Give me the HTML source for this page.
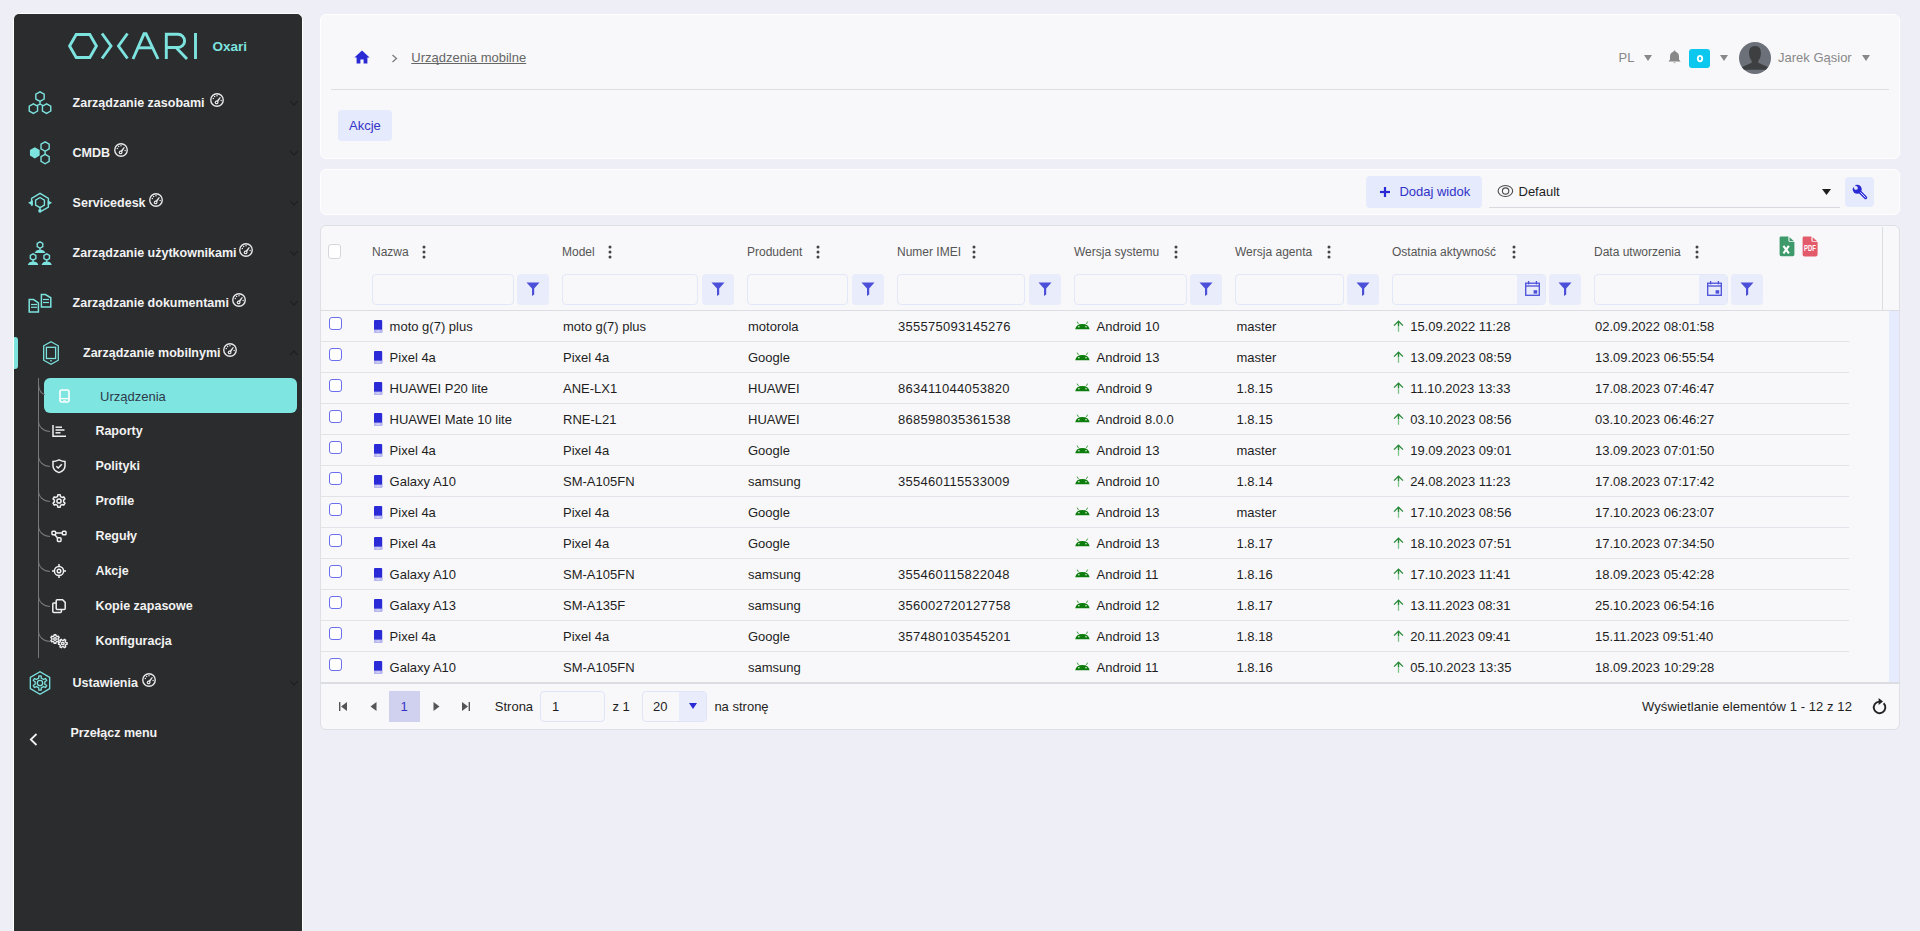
<!DOCTYPE html>
<html lang="pl">
<head>
<meta charset="utf-8">
<title>Urządzenia mobilne</title>
<style>
*{box-sizing:border-box;margin:0;padding:0}
html,body{width:1920px;height:931px;overflow:hidden}
body{background:#eeeef6;font-family:"Liberation Sans",sans-serif;position:relative;color:#1e1e1e}
.abs{position:absolute}
svg{display:block;overflow:visible}
#sb{position:absolute;left:13px;top:13px;width:290px;height:930px;background:#2b2c2e;border:1px solid #fff;border-bottom:none;border-radius:6px 6px 0 0}
.card{position:absolute;background:#f8f8fa;border:1px solid #fff;border-radius:6px}
.t{position:absolute;white-space:nowrap;line-height:1}
</style>
</head>
<body>
<div id="sb"></div>
<svg class="abs" style="left:68px;top:33px;" width="131" height="26" viewBox="0 0 131 26"><g fill="none" stroke="#7de3df" stroke-width="2.9" stroke-linejoin="miter">
<polygon points="1.6,13 8.2,1.5 21.8,1.5 28.4,13 21.8,24.5 8.2,24.5"/>
<polyline points="34,0.5 43,13 34,25.5"/>
<polyline points="59.5,0.5 50.5,13 59.5,25.5"/>
<polyline points="65,26 76,0.8 78,0.8 90,26"/>
<line x1="70.4" y1="14.8" x2="84.1" y2="14.8"/>
<path d="M98.3,26 V1.3 H110 A6.5,6.5 0 0 1 110,14.5 H98.3 M108,14.5 L119,26"/>
<line x1="127.5" y1="0" x2="127.5" y2="26"/>
</g></svg>
<div class="t" style="left:212.5px;top:39.97px;font-size:13.5px;color:#7de3df;font-weight:bold;">Oxari</div>
<svg class="abs" style="left:28px;top:91px;" width="24" height="24" viewBox="0 0 24 24"><g fill="none" stroke="#7de3df" stroke-width="1.4">
<polygon points="16.16,8.00 12.00,10.40 7.84,8.00 7.84,3.20 12.00,0.80 16.16,3.20"/><polygon points="9.56,20.00 5.40,22.40 1.24,20.00 1.24,15.20 5.40,12.80 9.56,15.20"/><polygon points="22.76,20.00 18.60,22.40 14.44,20.00 14.44,15.20 18.60,12.80 22.76,15.20"/>
<polyline points="12,10.4 12,13 9,14.6"/><line x1="12" y1="13" x2="15" y2="14.6"/></g></svg>
<div class="t" style="left:72.6px;top:97.42px;font-size:12.5px;color:#f2f2f2;font-weight:bold;">Zarządzanie zasobami</div>
<svg class="abs" style="left:209.5px;top:93px;" width="14" height="14" viewBox="0 0 14 14"><circle cx="7" cy="7" r="6.25" fill="none" stroke="#e8e8e8" stroke-width="1.4"/>
<g fill="#e8e8e8"><circle cx="6.6" cy="9.4" r="1.9"/><path d="M5.9,8.8 L9.9,3.9 L10.9,4.6 L7.4,9.9 Z"/>
<circle cx="3.3" cy="5.6" r="0.75"/><circle cx="4.6" cy="3.5" r="0.75"/><circle cx="7" cy="2.7" r="0.75"/><circle cx="11.1" cy="7.6" r="0.75"/></g>
<circle cx="6.6" cy="9.4" r="0.7" fill="#2b2c2e"/></svg>
<svg class="abs" style="left:289px;top:100px;" width="10" height="6" viewBox="0 0 10 6"><polyline points="1,1 5,5 9,1" fill="none" stroke="#1f2023" stroke-width="1.3"/></svg>
<svg class="abs" style="left:29px;top:141px;" width="24" height="24" viewBox="0 0 24 24"><polygon points="10.65,14.60 5.80,17.40 0.95,14.60 0.95,9.00 5.80,6.20 10.65,9.00" fill="#7de3df"/>
<g fill="none" stroke="#7de3df" stroke-width="1.4"><polygon points="20.17,7.95 16.10,10.30 12.03,7.95 12.03,3.25 16.10,0.90 20.17,3.25"/><polygon points="20.17,20.45 16.10,22.80 12.03,20.45 12.03,15.75 16.10,13.40 20.17,15.75"/>
<line x1="16.1" y1="10.3" x2="16.1" y2="13.4"/></g></svg>
<div class="t" style="left:72.6px;top:147.42px;font-size:12.5px;color:#f2f2f2;font-weight:bold;">CMDB</div>
<svg class="abs" style="left:113.5px;top:143px;" width="14" height="14" viewBox="0 0 14 14"><circle cx="7" cy="7" r="6.25" fill="none" stroke="#e8e8e8" stroke-width="1.4"/>
<g fill="#e8e8e8"><circle cx="6.6" cy="9.4" r="1.9"/><path d="M5.9,8.8 L9.9,3.9 L10.9,4.6 L7.4,9.9 Z"/>
<circle cx="3.3" cy="5.6" r="0.75"/><circle cx="4.6" cy="3.5" r="0.75"/><circle cx="7" cy="2.7" r="0.75"/><circle cx="11.1" cy="7.6" r="0.75"/></g>
<circle cx="6.6" cy="9.4" r="0.7" fill="#2b2c2e"/></svg>
<svg class="abs" style="left:289px;top:150px;" width="10" height="6" viewBox="0 0 10 6"><polyline points="1,1 5,5 9,1" fill="none" stroke="#1f2023" stroke-width="1.3"/></svg>
<svg class="abs" style="left:28px;top:191px;" width="24" height="24" viewBox="0 0 24 24"><g fill="none" stroke="#7de3df" stroke-width="1.4">
<polygon points="16.42,14.15 12.00,16.70 7.58,14.15 7.58,9.05 12.00,6.50 16.42,9.05"/>
<path d="M3.6,14.7 V7.3 L12,2.4 L20.4,7.3 V16.2 L13.4,20.2"/><line x1="12" y1="16.6" x2="12" y2="19"/></g>
<g fill="#7de3df"><polygon points="0,11.8 4.9,9.2 4.9,14.8"/><polygon points="24,11.8 19.7,9.2 19.7,14.6"/><circle cx="12" cy="19.9" r="1.8"/></g></svg>
<div class="t" style="left:72.6px;top:197.42px;font-size:12.5px;color:#f2f2f2;font-weight:bold;">Servicedesk</div>
<svg class="abs" style="left:148.5px;top:193px;" width="14" height="14" viewBox="0 0 14 14"><circle cx="7" cy="7" r="6.25" fill="none" stroke="#e8e8e8" stroke-width="1.4"/>
<g fill="#e8e8e8"><circle cx="6.6" cy="9.4" r="1.9"/><path d="M5.9,8.8 L9.9,3.9 L10.9,4.6 L7.4,9.9 Z"/>
<circle cx="3.3" cy="5.6" r="0.75"/><circle cx="4.6" cy="3.5" r="0.75"/><circle cx="7" cy="2.7" r="0.75"/><circle cx="11.1" cy="7.6" r="0.75"/></g>
<circle cx="6.6" cy="9.4" r="0.7" fill="#2b2c2e"/></svg>
<svg class="abs" style="left:289px;top:200px;" width="10" height="6" viewBox="0 0 10 6"><polyline points="1,1 5,5 9,1" fill="none" stroke="#1f2023" stroke-width="1.3"/></svg>
<svg class="abs" style="left:28px;top:241px;" width="24" height="24" viewBox="0 0 24 24"><g fill="none" stroke="#7de3df" stroke-width="1.4"><polygon points="14.77,5.70 12.00,7.30 9.23,5.70 9.23,2.50 12.00,0.90 14.77,2.50"/><polygon points="7.87,17.60 5.10,19.20 2.33,17.60 2.33,14.40 5.10,12.80 7.87,14.40"/><polygon points="21.47,17.60 18.70,19.20 15.93,17.60 15.93,14.40 18.70,12.80 21.47,14.40"/></g>
<g fill="#7de3df"><path d="M6.6,12.1 Q7.6,8.7 12,8.7 Q16.4,8.7 17.4,12.1 Z"/><path d="M-0.2,24 Q0.8,20.6 5.1,20.6 Q9.4,20.6 10.4,24 Z"/><path d="M13.6,24 Q14.6,20.6 18.7,20.6 Q22.8,20.6 23.8,24 Z"/></g>
<g stroke="#7de3df" stroke-width="1.3"><line x1="12" y1="7.3" x2="12" y2="9"/><line x1="5.1" y1="19.2" x2="5.1" y2="21"/><line x1="18.7" y1="19.2" x2="18.7" y2="21"/></g></svg>
<div class="t" style="left:72.6px;top:247.42px;font-size:12.5px;color:#f2f2f2;font-weight:bold;">Zarządzanie użytkownikami</div>
<svg class="abs" style="left:239px;top:243px;" width="14" height="14" viewBox="0 0 14 14"><circle cx="7" cy="7" r="6.25" fill="none" stroke="#e8e8e8" stroke-width="1.4"/>
<g fill="#e8e8e8"><circle cx="6.6" cy="9.4" r="1.9"/><path d="M5.9,8.8 L9.9,3.9 L10.9,4.6 L7.4,9.9 Z"/>
<circle cx="3.3" cy="5.6" r="0.75"/><circle cx="4.6" cy="3.5" r="0.75"/><circle cx="7" cy="2.7" r="0.75"/><circle cx="11.1" cy="7.6" r="0.75"/></g>
<circle cx="6.6" cy="9.4" r="0.7" fill="#2b2c2e"/></svg>
<svg class="abs" style="left:289px;top:250px;" width="10" height="6" viewBox="0 0 10 6"><polyline points="1,1 5,5 9,1" fill="none" stroke="#1f2023" stroke-width="1.3"/></svg>
<svg class="abs" style="left:28px;top:293px;" width="24" height="20" viewBox="0 0 24 20"><g fill="none" stroke="#7de3df" stroke-width="1.5">
<path d="M1.2,6.6 H5.6 L10.4,9.8 V19 H1.2 Z"/><path d="M13.4,1.6 H17.4 L22.8,4.8 V14 H13.4 Z"/></g>
<g fill="none" stroke="#7de3df" stroke-width="1.2">
<line x1="3" y1="11.5" x2="9" y2="11.5"/><line x1="3" y1="14.3" x2="9" y2="14.3"/>
<line x1="15" y1="6.5" x2="21" y2="6.5"/><line x1="15" y1="9.5" x2="21" y2="9.5"/></g></svg>
<div class="t" style="left:72.6px;top:297.42px;font-size:12.5px;color:#f2f2f2;font-weight:bold;">Zarządzanie dokumentami</div>
<svg class="abs" style="left:232px;top:293px;" width="14" height="14" viewBox="0 0 14 14"><circle cx="7" cy="7" r="6.25" fill="none" stroke="#e8e8e8" stroke-width="1.4"/>
<g fill="#e8e8e8"><circle cx="6.6" cy="9.4" r="1.9"/><path d="M5.9,8.8 L9.9,3.9 L10.9,4.6 L7.4,9.9 Z"/>
<circle cx="3.3" cy="5.6" r="0.75"/><circle cx="4.6" cy="3.5" r="0.75"/><circle cx="7" cy="2.7" r="0.75"/><circle cx="11.1" cy="7.6" r="0.75"/></g>
<circle cx="6.6" cy="9.4" r="0.7" fill="#2b2c2e"/></svg>
<svg class="abs" style="left:289px;top:300px;" width="10" height="6" viewBox="0 0 10 6"><polyline points="1,1 5,5 9,1" fill="none" stroke="#1f2023" stroke-width="1.3"/></svg>
<svg class="abs" style="left:43px;top:341px;" width="16" height="24" viewBox="0 0 16 24"><g fill="none" stroke="#7de3df" stroke-width="1.3">
<polygon points="8,0.8 15.3,4.8 15.3,19.2 8,23.2 0.7,19.2 0.7,4.8"/>
<rect x="3.4" y="6.3" width="9.2" height="11.2"/></g><rect x="7" y="19.3" width="2" height="1.1" fill="#7de3df"/></svg>
<div class="t" style="left:83px;top:347.42px;font-size:12.5px;color:#f2f2f2;font-weight:bold;">Zarządzanie mobilnymi</div>
<svg class="abs" style="left:222.5px;top:343px;" width="14" height="14" viewBox="0 0 14 14"><circle cx="7" cy="7" r="6.25" fill="none" stroke="#e8e8e8" stroke-width="1.4"/>
<g fill="#e8e8e8"><circle cx="6.6" cy="9.4" r="1.9"/><path d="M5.9,8.8 L9.9,3.9 L10.9,4.6 L7.4,9.9 Z"/>
<circle cx="3.3" cy="5.6" r="0.75"/><circle cx="4.6" cy="3.5" r="0.75"/><circle cx="7" cy="2.7" r="0.75"/><circle cx="11.1" cy="7.6" r="0.75"/></g>
<circle cx="6.6" cy="9.4" r="0.7" fill="#2b2c2e"/></svg>
<svg class="abs" style="left:289px;top:350px;" width="10" height="6" viewBox="0 0 10 6"><polyline points="1,5 5,1 9,5" fill="none" stroke="#1f2023" stroke-width="1.3"/></svg>
<svg class="abs" style="left:29px;top:671px;" width="22" height="24" viewBox="0 0 22 24"><g fill="none" stroke="#7de3df" stroke-width="1.3">
<polygon points="20.70,17.60 11.00,23.20 1.30,17.60 1.30,6.40 11.00,0.80 20.70,6.40"/>
<circle cx="11" cy="12" r="2.7"/>
<path d="M9.71,7.17 L9.87,4.89 L12.13,4.89 L12.29,7.17 L14.54,8.46 L16.60,7.47 L17.72,9.42 L15.83,10.71 L15.83,13.29 L17.72,14.58 L16.60,16.53 L14.54,15.54 L12.29,16.83 L12.13,19.11 L9.87,19.11 L9.71,16.83 L7.46,15.54 L5.40,16.53 L4.28,14.58 L6.17,13.29 L6.17,10.71 L4.28,9.42 L5.40,7.47 L7.46,8.46 Z" stroke-linejoin="round"/></g></svg>
<div class="t" style="left:72.6px;top:677.42px;font-size:12.5px;color:#f2f2f2;font-weight:bold;">Ustawienia</div>
<svg class="abs" style="left:142px;top:673px;" width="14" height="14" viewBox="0 0 14 14"><circle cx="7" cy="7" r="6.25" fill="none" stroke="#e8e8e8" stroke-width="1.4"/>
<g fill="#e8e8e8"><circle cx="6.6" cy="9.4" r="1.9"/><path d="M5.9,8.8 L9.9,3.9 L10.9,4.6 L7.4,9.9 Z"/>
<circle cx="3.3" cy="5.6" r="0.75"/><circle cx="4.6" cy="3.5" r="0.75"/><circle cx="7" cy="2.7" r="0.75"/><circle cx="11.1" cy="7.6" r="0.75"/></g>
<circle cx="6.6" cy="9.4" r="0.7" fill="#2b2c2e"/></svg>
<svg class="abs" style="left:289px;top:680px;" width="10" height="6" viewBox="0 0 10 6"><polyline points="1,1 5,5 9,1" fill="none" stroke="#1f2023" stroke-width="1.3"/></svg>
<div class="abs" style="left:14px;top:337px;width:4px;height:32px;background:#7de3df;border-radius:0 3px 3px 0"></div>
<div class="abs" style="left:38px;top:378px;width:1px;height:280px;background:#77787a"></div>
<div class="abs" style="left:44px;top:378px;width:253px;height:35px;background:#7ee5e1;border-radius:6px"></div>
<div class="abs" style="left:38px;top:380px;width:7px;height:15px;border-left:1px solid #77787a;border-bottom:1px solid #77787a;border-bottom-left-radius:8px 13px"></div>
<svg class="abs" style="left:59px;top:389px;" width="11" height="14" viewBox="0 0 11 14"><rect x="1" y="1" width="9" height="12" rx="1.6" fill="none" stroke="#fff" stroke-width="1.6"/><line x1="1" y1="9.6" x2="10" y2="9.6" stroke="#fff" stroke-width="1.3"/><line x1="4.3" y1="11.3" x2="6.7" y2="11.3" stroke="#fff" stroke-width="0.9"/></svg>
<div class="t" style="left:100px;top:389.99px;font-size:13px;color:#2e3a4a;">Urządzenia</div>
<div class="abs" style="left:38px;top:421px;width:12px;height:11px;border-left:1px solid #77787a;border-bottom:1px solid #77787a;border-bottom-left-radius:12px 11px"></div>
<svg class="abs" style="left:52px;top:425px;" width="15" height="13" viewBox="0 0 15 13"><g fill="none" stroke="#f0f0f0" stroke-width="1.5"><polyline points="1,0 1,11.2 14,11.2"/><line x1="3.5" y1="2.2" x2="10" y2="2.2"/><line x1="3.5" y1="5" x2="12.5" y2="5"/><line x1="3.5" y1="7.8" x2="8.5" y2="7.8"/></g></svg>
<div class="t" style="left:95.4px;top:425.42px;font-size:12.5px;color:#f2f2f2;font-weight:bold;">Raporty</div>
<div class="abs" style="left:38px;top:456px;width:12px;height:11px;border-left:1px solid #77787a;border-bottom:1px solid #77787a;border-bottom-left-radius:12px 11px"></div>
<svg class="abs" style="left:52px;top:459px;" width="14" height="15" viewBox="0 0 14 15"><g fill="none" stroke="#f0f0f0" stroke-width="1.5"><path d="M7,0.9 Q10.5,2.6 13,2.6 V7 Q13,11.5 7,13.6 Q1,11.5 1,7 V2.6 Q3.5,2.6 7,0.9 Z"/><polyline points="4.3,7.2 6.2,9 9.8,5.2"/></g></svg>
<div class="t" style="left:95.4px;top:460.42px;font-size:12.5px;color:#f2f2f2;font-weight:bold;">Polityki</div>
<div class="abs" style="left:38px;top:491px;width:12px;height:11px;border-left:1px solid #77787a;border-bottom:1px solid #77787a;border-bottom-left-radius:12px 11px"></div>
<svg class="abs" style="left:52px;top:494px;" width="14" height="14" viewBox="0 0 14 14"><g fill="none" stroke="#f0f0f0" stroke-width="1.5" stroke-linejoin="round"><circle cx="7" cy="7" r="2.1"/><path d="M5.50,2.55 L5.82,0.81 L8.18,0.81 L8.50,2.55 L10.11,3.47 L11.77,2.88 L12.95,4.93 L11.61,6.07 L11.61,7.93 L12.95,9.07 L11.77,11.12 L10.11,10.53 L8.50,11.45 L8.18,13.19 L5.82,13.19 L5.50,11.45 L3.89,10.53 L2.23,11.12 L1.05,9.07 L2.39,7.93 L2.39,6.07 L1.05,4.93 L2.23,2.88 L3.89,3.47 Z"/></g></svg>
<div class="t" style="left:95.4px;top:495.42px;font-size:12.5px;color:#f2f2f2;font-weight:bold;">Profile</div>
<div class="abs" style="left:38px;top:526px;width:12px;height:11px;border-left:1px solid #77787a;border-bottom:1px solid #77787a;border-bottom-left-radius:12px 11px"></div>
<svg class="abs" style="left:51px;top:530px;" width="16" height="13" viewBox="0 0 16 13"><g fill="none" stroke="#f0f0f0" stroke-width="1.5"><rect x="1" y="1.2" width="3.6" height="3.6" rx="0.8"/><rect x="11.4" y="1.2" width="3.6" height="3.6" rx="0.8"/><rect x="6.4" y="7.8" width="3.6" height="3.6" rx="0.8"/><line x1="4.6" y1="3" x2="11.4" y2="3"/><line x1="3.6" y1="4.6" x2="6.6" y2="8"/></g></svg>
<div class="t" style="left:95.4px;top:530.42px;font-size:12.5px;color:#f2f2f2;font-weight:bold;">Reguły</div>
<div class="abs" style="left:38px;top:561px;width:12px;height:11px;border-left:1px solid #77787a;border-bottom:1px solid #77787a;border-bottom-left-radius:12px 11px"></div>
<svg class="abs" style="left:52px;top:564px;" width="14" height="14" viewBox="0 0 14 14"><g fill="none" stroke="#f0f0f0" stroke-width="1.5"><circle cx="7" cy="7" r="4.6"/><circle cx="7" cy="7" r="1.8"/><line x1="7" y1="0" x2="7" y2="2.2"/><line x1="7" y1="11.8" x2="7" y2="14"/><line x1="0" y1="7" x2="2.2" y2="7"/><line x1="11.8" y1="7" x2="14" y2="7"/></g></svg>
<div class="t" style="left:95.4px;top:565.42px;font-size:12.5px;color:#f2f2f2;font-weight:bold;">Akcje</div>
<div class="abs" style="left:38px;top:596px;width:12px;height:11px;border-left:1px solid #77787a;border-bottom:1px solid #77787a;border-bottom-left-radius:12px 11px"></div>
<svg class="abs" style="left:52px;top:599px;" width="14" height="14" viewBox="0 0 14 14"><g fill="none" stroke="#f0f0f0" stroke-width="1.5"><path d="M5.2,0.8 H10.6 L13.2,3.4 V9.6 Q13.2,10.6 12.2,10.6 H5.2 Q4.2,10.6 4.2,9.6 V1.8 Q4.2,0.8 5.2,0.8 Z"/><path d="M4.2,4 H1.8 Q0.8,4 0.8,5 V12.6 Q0.8,13.6 1.8,13.6 H8.4 Q9.4,13.6 9.4,12.6 V10.6"/></g></svg>
<div class="t" style="left:95.4px;top:600.42px;font-size:12.5px;color:#f2f2f2;font-weight:bold;">Kopie zapasowe</div>
<div class="abs" style="left:38px;top:631px;width:12px;height:11px;border-left:1px solid #77787a;border-bottom:1px solid #77787a;border-bottom-left-radius:12px 11px"></div>
<svg class="abs" style="left:50px;top:634px;" width="18" height="14" viewBox="0 0 18 14"><g fill="none" stroke="#f0f0f0" stroke-width="1.4" stroke-linejoin="round"><circle cx="5" cy="5" r="1.3"/><path d="M3.98,1.97 L4.18,0.68 L5.82,0.68 L6.02,1.97 L7.12,2.60 L8.33,2.12 L9.16,3.55 L8.14,4.37 L8.14,5.63 L9.16,6.45 L8.33,7.88 L7.12,7.40 L6.02,8.03 L5.82,9.32 L4.18,9.32 L3.98,8.03 L2.88,7.40 L1.67,7.88 L0.84,6.45 L1.86,5.63 L1.86,4.37 L0.84,3.55 L1.67,2.12 L2.88,2.60 Z"/><circle cx="12.8" cy="9.5" r="1.3"/><path d="M15.83,8.48 L17.12,8.68 L17.12,10.32 L15.83,10.52 L15.20,11.62 L15.68,12.83 L14.25,13.66 L13.43,12.64 L12.17,12.64 L11.35,13.66 L9.92,12.83 L10.40,11.62 L9.77,10.52 L8.48,10.32 L8.48,8.68 L9.77,8.48 L10.40,7.38 L9.92,6.17 L11.35,5.34 L12.17,6.36 L13.43,6.36 L14.25,5.34 L15.68,6.17 L15.20,7.38 Z"/></g></svg>
<div class="t" style="left:95.4px;top:635.42px;font-size:12.5px;color:#f2f2f2;font-weight:bold;">Konfiguracja</div>
<svg class="abs" style="left:29px;top:733px;" width="9" height="13" viewBox="0 0 9 13"><polyline points="7.5,1 1.8,6.5 7.5,12" fill="none" stroke="#f2f2f2" stroke-width="1.8"/></svg>
<div class="t" style="left:70.4px;top:727.42px;font-size:12.5px;color:#f2f2f2;font-weight:bold;">Przełącz menu</div>

<div class="card" style="left:320px;top:14px;width:1580px;height:145px"></div>
<div class="card" style="left:320px;top:169px;width:1580px;height:46px"></div>
<div class="card" style="left:320px;top:225px;width:1580px;height:505px;border-color:#dfe0e6"></div>
<svg class="abs" style="left:354px;top:50px;" width="16" height="14" viewBox="0 0 16 14"><path d="M8,0.6 L15.6,7.4 H13.4 V13.6 H9.6 V9.6 H6.4 V13.6 H2.6 V7.4 H0.4 Z" fill="#2a2ad4"/></svg>
<svg class="abs" style="left:391px;top:54px;" width="7" height="9" viewBox="0 0 7 9"><polyline points="1.5,1 5.5,4.5 1.5,8" fill="none" stroke="#777" stroke-width="1.2"/></svg>
<div class="t" style="left:411.3px;top:50.99px;font-size:13px;color:#666;text-decoration:underline;text-underline-offset:0.6px;text-decoration-skip-ink:none">Urządzenia mobilne</div>
<div class="abs" style="left:331px;top:89px;width:1558px;height:1px;background:#dcdde3"></div>
<div class="abs" style="left:338px;top:110px;width:54px;height:31px;background:#e5eafc;border-radius:4px"></div>
<div class="t" style="left:349px;top:118.99px;font-size:13px;color:#3434c6;">Akcje</div>
<div class="t" style="left:1618.5px;top:51.29px;font-size:13px;color:#888;">PL</div>
<svg class="abs" style="left:1644px;top:55px;" width="8" height="6" viewBox="0 0 8 6"><polygon points="0,0 8,0 4,6" fill="#888"/></svg>
<svg class="abs" style="left:1668px;top:50px;" width="13" height="14" viewBox="0 0 13 14"><path d="M6.5,0.6 Q7.6,0.6 7.6,1.8 Q11,2.8 11,6.6 V9.6 L12.6,11.6 H0.4 L2,9.6 V6.6 Q2,2.8 5.4,1.8 Q5.4,0.6 6.5,0.6 Z" fill="#888"/><path d="M5,12.4 H8 Q6.5,14 5,12.4Z" fill="#888"/></svg>
<div class="abs" style="left:1689px;top:49px;width:21px;height:19px;background:#0cc8ee;border-radius:3px"></div>
<svg class="abs" style="left:1696px;top:54px;" width="8" height="9" viewBox="0 0 8 9"><ellipse cx="4" cy="4.6" rx="2.2" ry="2.75" fill="none" stroke="#fff" stroke-width="1.9"/></svg>
<svg class="abs" style="left:1720px;top:55px;" width="8" height="6" viewBox="0 0 8 6"><polygon points="0,0 8,0 4,6" fill="#888"/></svg>
<svg class="abs" style="left:1739px;top:42px;" width="32" height="32" viewBox="0 0 32 32"><defs><clipPath id="avc"><circle cx="16" cy="16" r="16"/></clipPath></defs><circle cx="16" cy="16" r="16" fill="#6b7079"/><path clip-path="url(#avc)" d="M16,3.9 C21.4,3.9 22,8 21.9,11.5 C21.8,15 20.6,17.4 19.3,18.8 L19.3,20.8 L28.8,25 V27.7 H3.2 V25 L12.7,20.8 L12.7,18.8 C11.4,17.4 10.2,15 10.1,11.5 C10,8 10.6,3.9 16,3.9 Z" fill="#3e3f41"/></svg>
<div class="t" style="left:1778px;top:51.29px;font-size:13px;color:#888;">Jarek Gąsior</div>
<svg class="abs" style="left:1862px;top:55px;" width="8" height="6" viewBox="0 0 8 6"><polygon points="0,0 8,0 4,6" fill="#888"/></svg>
<div class="abs" style="left:1366px;top:176px;width:116px;height:32px;background:#e5eafc;border-radius:4px"></div>
<svg class="abs" style="left:1380px;top:187px;" width="10" height="10" viewBox="0 0 10 10"><g stroke="#2a2ad4" stroke-width="2.2"><line x1="5" y1="0" x2="5" y2="10"/><line x1="0" y1="5" x2="10" y2="5"/></g></svg>
<div class="t" style="left:1399.4px;top:184.59px;font-size:13px;color:#3232c8;">Dodaj widok</div>
<svg class="abs" style="left:1497px;top:184px;" width="17" height="14" viewBox="0 0 17 14"><g fill="none" stroke="#4a4a4a" stroke-width="1.1"><ellipse cx="8.4" cy="7" rx="7.3" ry="5.5"/><ellipse cx="8.6" cy="7" rx="3.2" ry="3.1"/></g></svg>
<div class="t" style="left:1518.5px;top:184.59px;font-size:13px;color:#1e1e1e;">Default</div>
<svg class="abs" style="left:1822px;top:189px;" width="9" height="6" viewBox="0 0 9 6"><polygon points="0,0 9,0 4.5,6" fill="#1e1e1e"/></svg>
<div class="abs" style="left:1489px;top:207px;width:351px;height:1px;background:#d8d9de"></div>
<div class="abs" style="left:1845px;top:177px;width:29px;height:30px;background:#e5eafc;border-radius:4px"></div>
<svg class="abs" style="left:1852px;top:184px;" width="16" height="16" viewBox="0 0 16 16"><g stroke-linecap="round"><line x1="6.8" y1="6.8" x2="13.6" y2="13.6" stroke="#2a2ad4" stroke-width="3.2"/><line x1="7.4" y1="7.4" x2="13.4" y2="13.4" stroke="#e5eafc" stroke-width="1"/></g><circle cx="5.2" cy="5.2" r="4.5" fill="#2a2ad4"/><circle cx="3.9" cy="3.9" r="1.9" fill="#e5eafc"/><path d="M3.9,2 L1.2,-0.6 L-0.6,1.2 L2,3.9 Z" fill="#e5eafc"/></svg>

<div class="abs" style="left:328px;top:244px;width:13px;height:15px;border:1px solid #d6d7dc;border-radius:3px;background:#fff"></div>
<div class="t" style="left:372px;top:245.84px;font-size:12px;color:#555;">Nazwa</div>
<svg class="abs" style="left:421.5px;top:245px;" width="4" height="14" viewBox="0 0 4 14"><g fill="#444"><circle cx="2" cy="2" r="1.5"/><circle cx="2" cy="7" r="1.5"/><circle cx="2" cy="12" r="1.5"/></g></svg>
<div class="abs" style="left:372px;top:274px;width:142px;height:31px;border:1px solid #e3e8f8;border-radius:4px;overflow:hidden"></div>
<div class="abs" style="left:517px;top:274px;width:32px;height:31px;background:#e8ecfb;border-radius:4px"></div>
<svg class="abs" style="left:526px;top:282px;" width="14" height="14" viewBox="0 0 14 14"><path d="M0.5,0.5 H13.5 L8.2,6.4 V12.5 L6,14 V6.4 Z" fill="#4c50d9"/></svg>
<div class="t" style="left:562px;top:245.84px;font-size:12px;color:#555;">Model</div>
<svg class="abs" style="left:607.5px;top:245px;" width="4" height="14" viewBox="0 0 4 14"><g fill="#444"><circle cx="2" cy="2" r="1.5"/><circle cx="2" cy="7" r="1.5"/><circle cx="2" cy="12" r="1.5"/></g></svg>
<div class="abs" style="left:562px;top:274px;width:136px;height:31px;border:1px solid #e3e8f8;border-radius:4px;overflow:hidden"></div>
<div class="abs" style="left:702px;top:274px;width:32px;height:31px;background:#e8ecfb;border-radius:4px"></div>
<svg class="abs" style="left:711px;top:282px;" width="14" height="14" viewBox="0 0 14 14"><path d="M0.5,0.5 H13.5 L8.2,6.4 V12.5 L6,14 V6.4 Z" fill="#4c50d9"/></svg>
<div class="t" style="left:747px;top:245.84px;font-size:12px;color:#555;">Produdent</div>
<svg class="abs" style="left:815.5px;top:245px;" width="4" height="14" viewBox="0 0 4 14"><g fill="#444"><circle cx="2" cy="2" r="1.5"/><circle cx="2" cy="7" r="1.5"/><circle cx="2" cy="12" r="1.5"/></g></svg>
<div class="abs" style="left:747px;top:274px;width:101px;height:31px;border:1px solid #e3e8f8;border-radius:4px;overflow:hidden"></div>
<div class="abs" style="left:852px;top:274px;width:32px;height:31px;background:#e8ecfb;border-radius:4px"></div>
<svg class="abs" style="left:861px;top:282px;" width="14" height="14" viewBox="0 0 14 14"><path d="M0.5,0.5 H13.5 L8.2,6.4 V12.5 L6,14 V6.4 Z" fill="#4c50d9"/></svg>
<div class="t" style="left:897px;top:245.84px;font-size:12px;color:#555;">Numer IMEI</div>
<svg class="abs" style="left:971.5px;top:245px;" width="4" height="14" viewBox="0 0 4 14"><g fill="#444"><circle cx="2" cy="2" r="1.5"/><circle cx="2" cy="7" r="1.5"/><circle cx="2" cy="12" r="1.5"/></g></svg>
<div class="abs" style="left:897px;top:274px;width:128px;height:31px;border:1px solid #e3e8f8;border-radius:4px;overflow:hidden"></div>
<div class="abs" style="left:1029px;top:274px;width:32px;height:31px;background:#e8ecfb;border-radius:4px"></div>
<svg class="abs" style="left:1038px;top:282px;" width="14" height="14" viewBox="0 0 14 14"><path d="M0.5,0.5 H13.5 L8.2,6.4 V12.5 L6,14 V6.4 Z" fill="#4c50d9"/></svg>
<div class="t" style="left:1074px;top:245.84px;font-size:12px;color:#555;">Wersja systemu</div>
<svg class="abs" style="left:1173.5px;top:245px;" width="4" height="14" viewBox="0 0 4 14"><g fill="#444"><circle cx="2" cy="2" r="1.5"/><circle cx="2" cy="7" r="1.5"/><circle cx="2" cy="12" r="1.5"/></g></svg>
<div class="abs" style="left:1074px;top:274px;width:113px;height:31px;border:1px solid #e3e8f8;border-radius:4px;overflow:hidden"></div>
<div class="abs" style="left:1190px;top:274px;width:32px;height:31px;background:#e8ecfb;border-radius:4px"></div>
<svg class="abs" style="left:1199px;top:282px;" width="14" height="14" viewBox="0 0 14 14"><path d="M0.5,0.5 H13.5 L8.2,6.4 V12.5 L6,14 V6.4 Z" fill="#4c50d9"/></svg>
<div class="t" style="left:1235px;top:245.84px;font-size:12px;color:#555;">Wersja agenta</div>
<svg class="abs" style="left:1326.5px;top:245px;" width="4" height="14" viewBox="0 0 4 14"><g fill="#444"><circle cx="2" cy="2" r="1.5"/><circle cx="2" cy="7" r="1.5"/><circle cx="2" cy="12" r="1.5"/></g></svg>
<div class="abs" style="left:1235px;top:274px;width:109px;height:31px;border:1px solid #e3e8f8;border-radius:4px;overflow:hidden"></div>
<div class="abs" style="left:1347px;top:274px;width:32px;height:31px;background:#e8ecfb;border-radius:4px"></div>
<svg class="abs" style="left:1356px;top:282px;" width="14" height="14" viewBox="0 0 14 14"><path d="M0.5,0.5 H13.5 L8.2,6.4 V12.5 L6,14 V6.4 Z" fill="#4c50d9"/></svg>
<div class="t" style="left:1392px;top:245.84px;font-size:12px;color:#555;">Ostatnia aktywność</div>
<svg class="abs" style="left:1511.5px;top:245px;" width="4" height="14" viewBox="0 0 4 14"><g fill="#444"><circle cx="2" cy="2" r="1.5"/><circle cx="2" cy="7" r="1.5"/><circle cx="2" cy="12" r="1.5"/></g></svg>
<div class="abs" style="left:1392px;top:274px;width:154px;height:31px;border:1px solid #e3e8f8;border-radius:4px;overflow:hidden"><div class="abs" style="right:0;top:0;width:28px;height:29px;background:#e8ecfb"></div></div>
<svg class="abs" style="left:1525px;top:281px;" width="15" height="15" viewBox="0 0 15 15"><g fill="none" stroke="#4c50d9" stroke-width="1.3"><rect x="0.7" y="2.2" width="13.6" height="12.1"/><line x1="0.7" y1="5" x2="14.3" y2="5"/><line x1="3.6" y1="0" x2="3.6" y2="3.4"/><line x1="11.4" y1="0" x2="11.4" y2="3.4"/></g><rect x="8.6" y="9.2" width="3.6" height="3.4" fill="#4c50d9"/></svg>
<div class="abs" style="left:1549px;top:274px;width:32px;height:31px;background:#e8ecfb;border-radius:4px"></div>
<svg class="abs" style="left:1558px;top:282px;" width="14" height="14" viewBox="0 0 14 14"><path d="M0.5,0.5 H13.5 L8.2,6.4 V12.5 L6,14 V6.4 Z" fill="#4c50d9"/></svg>
<div class="t" style="left:1594px;top:245.84px;font-size:12px;color:#555;">Data utworzenia</div>
<svg class="abs" style="left:1694.5px;top:245px;" width="4" height="14" viewBox="0 0 4 14"><g fill="#444"><circle cx="2" cy="2" r="1.5"/><circle cx="2" cy="7" r="1.5"/><circle cx="2" cy="12" r="1.5"/></g></svg>
<div class="abs" style="left:1594px;top:274px;width:134px;height:31px;border:1px solid #e3e8f8;border-radius:4px;overflow:hidden"><div class="abs" style="right:0;top:0;width:28px;height:29px;background:#e8ecfb"></div></div>
<svg class="abs" style="left:1707px;top:281px;" width="15" height="15" viewBox="0 0 15 15"><g fill="none" stroke="#4c50d9" stroke-width="1.3"><rect x="0.7" y="2.2" width="13.6" height="12.1"/><line x1="0.7" y1="5" x2="14.3" y2="5"/><line x1="3.6" y1="0" x2="3.6" y2="3.4"/><line x1="11.4" y1="0" x2="11.4" y2="3.4"/></g><rect x="8.6" y="9.2" width="3.6" height="3.4" fill="#4c50d9"/></svg>
<div class="abs" style="left:1731px;top:274px;width:32px;height:31px;background:#e8ecfb;border-radius:4px"></div>
<svg class="abs" style="left:1740px;top:282px;" width="14" height="14" viewBox="0 0 14 14"><path d="M0.5,0.5 H13.5 L8.2,6.4 V12.5 L6,14 V6.4 Z" fill="#4c50d9"/></svg>
<div class="abs" style="left:1882px;top:227px;width:1px;height:84px;background:#dcdde2"></div>
<div class="abs" style="left:321px;top:310px;width:1578px;height:1px;background:#dcdde2"></div>
<svg class="abs" style="left:1779px;top:236px;" width="16" height="21" viewBox="0 0 16 21"><path d="M1.8,0.6 H9.4 V4.6 Q9.4,6 10.8,6 H15.4 V18.6 Q15.4,20.2 13.8,20.2 H2.2 Q0.6,20.2 0.6,18.6 V1.8 Q0.6,0.6 1.8,0.6 Z" fill="#3e9a6b"/><path d="M10.5,1.3 L15,5.2 H10.5 Z" fill="#3e9a6b"/><g stroke="#fff" stroke-width="2.1"><line x1="4.4" y1="9.8" x2="9.9" y2="17.4"/><line x1="9.9" y1="9.8" x2="4.4" y2="17.4"/></g></svg>
<svg class="abs" style="left:1802px;top:236px;" width="16" height="21" viewBox="0 0 16 21"><path d="M2,0.6 H9.4 V4.6 Q9.4,6 10.8,6 H15.6 V18.4 Q15.6,20.4 13.6,20.4 H2.6 Q0.6,20.4 0.6,18.4 V2 Q0.6,0.6 2,0.6 Z" fill="#e35a6a"/><path d="M10.6,1.3 L15.2,5.2 H10.6 Z" fill="#e35a6a"/><text x="2" y="15.4" font-family="Liberation Sans" font-weight="bold" font-size="8.4" fill="#fff" textLength="12" lengthAdjust="spacingAndGlyphs">PDF</text></svg>
<div class="abs" style="left:1889px;top:311px;width:10px;height:372px;background:#e6ebfd"></div>
<div class="abs" style="left:329px;top:317px;width:13px;height:13px;border:1px solid #6b6fee;border-radius:3px;background:#fff"></div>
<svg class="abs" style="left:373.6px;top:319.7px;" width="8.2" height="13" viewBox="0 0 8.2 13"><rect x="0" y="0" width="8.2" height="13" rx="1" fill="#2a2ad6"/><rect x="0" y="9.6" width="8.2" height="3.4" fill="#b9b9f0"/><rect x="2.6" y="10.6" width="3" height="1" fill="#fff" opacity="0.6"/></svg>
<div class="t" style="left:389.6px;top:319.99px;font-size:13px;color:#1e1e1e;">moto g(7) plus</div>
<div class="t" style="left:563px;top:319.99px;font-size:13px;color:#1e1e1e;">moto g(7) plus</div>
<div class="t" style="left:748px;top:319.99px;font-size:13px;color:#1e1e1e;">motorola</div>
<div class="t" style="left:898px;top:319.99px;font-size:13px;color:#1e1e1e;letter-spacing:0.28px">355575093145276</div>
<svg class="abs" style="left:1075px;top:321px;" width="15" height="9" viewBox="0 0 15 9"><path d="M0.2,8.3 A7.3,6.3 0 0 1 14.6,8.3 Z" fill="#0c7d0c"/><circle cx="3.9" cy="5.7" r="0.75" fill="#f8f8fa"/><circle cx="11" cy="5.7" r="0.75" fill="#f8f8fa"/><g stroke="#0c7d0c" stroke-width="0.8"><line x1="3.4" y1="2.9" x2="2.2" y2="0.6"/><line x1="11.4" y1="2.9" x2="12.6" y2="0.6"/></g></svg>
<div class="t" style="left:1096.5px;top:319.99px;font-size:13px;color:#1e1e1e;">Android 10</div>
<div class="t" style="left:1236.5px;top:319.99px;font-size:13px;color:#1e1e1e;">master</div>
<svg class="abs" style="left:1392.5px;top:320px;" width="11" height="12" viewBox="0 0 11 12"><g fill="none" stroke-width="1.3"><line x1="5.5" y1="1.2" x2="5.5" y2="11.8" stroke="#7cc48a"/><line x1="5.5" y1="1.2" x2="5.5" y2="6" stroke="#2a8a3a"/><polyline points="1,5.6 5.5,1.2 10,5.6" stroke="#2a8a3a"/></g></svg>
<div class="t" style="left:1410.2px;top:319.99px;font-size:13px;color:#1e1e1e;">15.09.2022 11:28</div>
<div class="t" style="left:1595px;top:319.99px;font-size:13px;color:#1e1e1e;">02.09.2022 08:01:58</div>
<div class="abs" style="left:321px;top:341px;width:1528px;height:1px;background:#e2e3e8"></div>
<div class="abs" style="left:329px;top:348px;width:13px;height:13px;border:1px solid #6b6fee;border-radius:3px;background:#fff"></div>
<svg class="abs" style="left:373.6px;top:350.7px;" width="8.2" height="13" viewBox="0 0 8.2 13"><rect x="0" y="0" width="8.2" height="13" rx="1" fill="#2a2ad6"/><rect x="0" y="9.6" width="8.2" height="3.4" fill="#b9b9f0"/><rect x="2.6" y="10.6" width="3" height="1" fill="#fff" opacity="0.6"/></svg>
<div class="t" style="left:389.6px;top:350.99px;font-size:13px;color:#1e1e1e;">Pixel 4a</div>
<div class="t" style="left:563px;top:350.99px;font-size:13px;color:#1e1e1e;">Pixel 4a</div>
<div class="t" style="left:748px;top:350.99px;font-size:13px;color:#1e1e1e;">Google</div>
<svg class="abs" style="left:1075px;top:352px;" width="15" height="9" viewBox="0 0 15 9"><path d="M0.2,8.3 A7.3,6.3 0 0 1 14.6,8.3 Z" fill="#0c7d0c"/><circle cx="3.9" cy="5.7" r="0.75" fill="#f8f8fa"/><circle cx="11" cy="5.7" r="0.75" fill="#f8f8fa"/><g stroke="#0c7d0c" stroke-width="0.8"><line x1="3.4" y1="2.9" x2="2.2" y2="0.6"/><line x1="11.4" y1="2.9" x2="12.6" y2="0.6"/></g></svg>
<div class="t" style="left:1096.5px;top:350.99px;font-size:13px;color:#1e1e1e;">Android 13</div>
<div class="t" style="left:1236.5px;top:350.99px;font-size:13px;color:#1e1e1e;">master</div>
<svg class="abs" style="left:1392.5px;top:351px;" width="11" height="12" viewBox="0 0 11 12"><g fill="none" stroke-width="1.3"><line x1="5.5" y1="1.2" x2="5.5" y2="11.8" stroke="#7cc48a"/><line x1="5.5" y1="1.2" x2="5.5" y2="6" stroke="#2a8a3a"/><polyline points="1,5.6 5.5,1.2 10,5.6" stroke="#2a8a3a"/></g></svg>
<div class="t" style="left:1410.2px;top:350.99px;font-size:13px;color:#1e1e1e;">13.09.2023 08:59</div>
<div class="t" style="left:1595px;top:350.99px;font-size:13px;color:#1e1e1e;">13.09.2023 06:55:54</div>
<div class="abs" style="left:321px;top:372px;width:1528px;height:1px;background:#e2e3e8"></div>
<div class="abs" style="left:329px;top:379px;width:13px;height:13px;border:1px solid #6b6fee;border-radius:3px;background:#fff"></div>
<svg class="abs" style="left:373.6px;top:381.7px;" width="8.2" height="13" viewBox="0 0 8.2 13"><rect x="0" y="0" width="8.2" height="13" rx="1" fill="#2a2ad6"/><rect x="0" y="9.6" width="8.2" height="3.4" fill="#b9b9f0"/><rect x="2.6" y="10.6" width="3" height="1" fill="#fff" opacity="0.6"/></svg>
<div class="t" style="left:389.6px;top:381.99px;font-size:13px;color:#1e1e1e;">HUAWEI P20 lite</div>
<div class="t" style="left:563px;top:381.99px;font-size:13px;color:#1e1e1e;">ANE-LX1</div>
<div class="t" style="left:748px;top:381.99px;font-size:13px;color:#1e1e1e;">HUAWEI</div>
<div class="t" style="left:898px;top:381.99px;font-size:13px;color:#1e1e1e;letter-spacing:0.28px">863411044053820</div>
<svg class="abs" style="left:1075px;top:383px;" width="15" height="9" viewBox="0 0 15 9"><path d="M0.2,8.3 A7.3,6.3 0 0 1 14.6,8.3 Z" fill="#0c7d0c"/><circle cx="3.9" cy="5.7" r="0.75" fill="#f8f8fa"/><circle cx="11" cy="5.7" r="0.75" fill="#f8f8fa"/><g stroke="#0c7d0c" stroke-width="0.8"><line x1="3.4" y1="2.9" x2="2.2" y2="0.6"/><line x1="11.4" y1="2.9" x2="12.6" y2="0.6"/></g></svg>
<div class="t" style="left:1096.5px;top:381.99px;font-size:13px;color:#1e1e1e;">Android 9</div>
<div class="t" style="left:1236.5px;top:381.99px;font-size:13px;color:#1e1e1e;">1.8.15</div>
<svg class="abs" style="left:1392.5px;top:382px;" width="11" height="12" viewBox="0 0 11 12"><g fill="none" stroke-width="1.3"><line x1="5.5" y1="1.2" x2="5.5" y2="11.8" stroke="#7cc48a"/><line x1="5.5" y1="1.2" x2="5.5" y2="6" stroke="#2a8a3a"/><polyline points="1,5.6 5.5,1.2 10,5.6" stroke="#2a8a3a"/></g></svg>
<div class="t" style="left:1410.2px;top:381.99px;font-size:13px;color:#1e1e1e;">11.10.2023 13:33</div>
<div class="t" style="left:1595px;top:381.99px;font-size:13px;color:#1e1e1e;">17.08.2023 07:46:47</div>
<div class="abs" style="left:321px;top:403px;width:1528px;height:1px;background:#e2e3e8"></div>
<div class="abs" style="left:329px;top:410px;width:13px;height:13px;border:1px solid #6b6fee;border-radius:3px;background:#fff"></div>
<svg class="abs" style="left:373.6px;top:412.7px;" width="8.2" height="13" viewBox="0 0 8.2 13"><rect x="0" y="0" width="8.2" height="13" rx="1" fill="#2a2ad6"/><rect x="0" y="9.6" width="8.2" height="3.4" fill="#b9b9f0"/><rect x="2.6" y="10.6" width="3" height="1" fill="#fff" opacity="0.6"/></svg>
<div class="t" style="left:389.6px;top:412.99px;font-size:13px;color:#1e1e1e;">HUAWEI Mate 10 lite</div>
<div class="t" style="left:563px;top:412.99px;font-size:13px;color:#1e1e1e;">RNE-L21</div>
<div class="t" style="left:748px;top:412.99px;font-size:13px;color:#1e1e1e;">HUAWEI</div>
<div class="t" style="left:898px;top:412.99px;font-size:13px;color:#1e1e1e;letter-spacing:0.28px">868598035361538</div>
<svg class="abs" style="left:1075px;top:414px;" width="15" height="9" viewBox="0 0 15 9"><path d="M0.2,8.3 A7.3,6.3 0 0 1 14.6,8.3 Z" fill="#0c7d0c"/><circle cx="3.9" cy="5.7" r="0.75" fill="#f8f8fa"/><circle cx="11" cy="5.7" r="0.75" fill="#f8f8fa"/><g stroke="#0c7d0c" stroke-width="0.8"><line x1="3.4" y1="2.9" x2="2.2" y2="0.6"/><line x1="11.4" y1="2.9" x2="12.6" y2="0.6"/></g></svg>
<div class="t" style="left:1096.5px;top:412.99px;font-size:13px;color:#1e1e1e;">Android 8.0.0</div>
<div class="t" style="left:1236.5px;top:412.99px;font-size:13px;color:#1e1e1e;">1.8.15</div>
<svg class="abs" style="left:1392.5px;top:413px;" width="11" height="12" viewBox="0 0 11 12"><g fill="none" stroke-width="1.3"><line x1="5.5" y1="1.2" x2="5.5" y2="11.8" stroke="#7cc48a"/><line x1="5.5" y1="1.2" x2="5.5" y2="6" stroke="#2a8a3a"/><polyline points="1,5.6 5.5,1.2 10,5.6" stroke="#2a8a3a"/></g></svg>
<div class="t" style="left:1410.2px;top:412.99px;font-size:13px;color:#1e1e1e;">03.10.2023 08:56</div>
<div class="t" style="left:1595px;top:412.99px;font-size:13px;color:#1e1e1e;">03.10.2023 06:46:27</div>
<div class="abs" style="left:321px;top:434px;width:1528px;height:1px;background:#e2e3e8"></div>
<div class="abs" style="left:329px;top:441px;width:13px;height:13px;border:1px solid #6b6fee;border-radius:3px;background:#fff"></div>
<svg class="abs" style="left:373.6px;top:443.7px;" width="8.2" height="13" viewBox="0 0 8.2 13"><rect x="0" y="0" width="8.2" height="13" rx="1" fill="#2a2ad6"/><rect x="0" y="9.6" width="8.2" height="3.4" fill="#b9b9f0"/><rect x="2.6" y="10.6" width="3" height="1" fill="#fff" opacity="0.6"/></svg>
<div class="t" style="left:389.6px;top:443.99px;font-size:13px;color:#1e1e1e;">Pixel 4a</div>
<div class="t" style="left:563px;top:443.99px;font-size:13px;color:#1e1e1e;">Pixel 4a</div>
<div class="t" style="left:748px;top:443.99px;font-size:13px;color:#1e1e1e;">Google</div>
<svg class="abs" style="left:1075px;top:445px;" width="15" height="9" viewBox="0 0 15 9"><path d="M0.2,8.3 A7.3,6.3 0 0 1 14.6,8.3 Z" fill="#0c7d0c"/><circle cx="3.9" cy="5.7" r="0.75" fill="#f8f8fa"/><circle cx="11" cy="5.7" r="0.75" fill="#f8f8fa"/><g stroke="#0c7d0c" stroke-width="0.8"><line x1="3.4" y1="2.9" x2="2.2" y2="0.6"/><line x1="11.4" y1="2.9" x2="12.6" y2="0.6"/></g></svg>
<div class="t" style="left:1096.5px;top:443.99px;font-size:13px;color:#1e1e1e;">Android 13</div>
<div class="t" style="left:1236.5px;top:443.99px;font-size:13px;color:#1e1e1e;">master</div>
<svg class="abs" style="left:1392.5px;top:444px;" width="11" height="12" viewBox="0 0 11 12"><g fill="none" stroke-width="1.3"><line x1="5.5" y1="1.2" x2="5.5" y2="11.8" stroke="#7cc48a"/><line x1="5.5" y1="1.2" x2="5.5" y2="6" stroke="#2a8a3a"/><polyline points="1,5.6 5.5,1.2 10,5.6" stroke="#2a8a3a"/></g></svg>
<div class="t" style="left:1410.2px;top:443.99px;font-size:13px;color:#1e1e1e;">19.09.2023 09:01</div>
<div class="t" style="left:1595px;top:443.99px;font-size:13px;color:#1e1e1e;">13.09.2023 07:01:50</div>
<div class="abs" style="left:321px;top:465px;width:1528px;height:1px;background:#e2e3e8"></div>
<div class="abs" style="left:329px;top:472px;width:13px;height:13px;border:1px solid #6b6fee;border-radius:3px;background:#fff"></div>
<svg class="abs" style="left:373.6px;top:474.7px;" width="8.2" height="13" viewBox="0 0 8.2 13"><rect x="0" y="0" width="8.2" height="13" rx="1" fill="#2a2ad6"/><rect x="0" y="9.6" width="8.2" height="3.4" fill="#b9b9f0"/><rect x="2.6" y="10.6" width="3" height="1" fill="#fff" opacity="0.6"/></svg>
<div class="t" style="left:389.6px;top:474.99px;font-size:13px;color:#1e1e1e;">Galaxy A10</div>
<div class="t" style="left:563px;top:474.99px;font-size:13px;color:#1e1e1e;">SM-A105FN</div>
<div class="t" style="left:748px;top:474.99px;font-size:13px;color:#1e1e1e;">samsung</div>
<div class="t" style="left:898px;top:474.99px;font-size:13px;color:#1e1e1e;letter-spacing:0.28px">355460115533009</div>
<svg class="abs" style="left:1075px;top:476px;" width="15" height="9" viewBox="0 0 15 9"><path d="M0.2,8.3 A7.3,6.3 0 0 1 14.6,8.3 Z" fill="#0c7d0c"/><circle cx="3.9" cy="5.7" r="0.75" fill="#f8f8fa"/><circle cx="11" cy="5.7" r="0.75" fill="#f8f8fa"/><g stroke="#0c7d0c" stroke-width="0.8"><line x1="3.4" y1="2.9" x2="2.2" y2="0.6"/><line x1="11.4" y1="2.9" x2="12.6" y2="0.6"/></g></svg>
<div class="t" style="left:1096.5px;top:474.99px;font-size:13px;color:#1e1e1e;">Android 10</div>
<div class="t" style="left:1236.5px;top:474.99px;font-size:13px;color:#1e1e1e;">1.8.14</div>
<svg class="abs" style="left:1392.5px;top:475px;" width="11" height="12" viewBox="0 0 11 12"><g fill="none" stroke-width="1.3"><line x1="5.5" y1="1.2" x2="5.5" y2="11.8" stroke="#7cc48a"/><line x1="5.5" y1="1.2" x2="5.5" y2="6" stroke="#2a8a3a"/><polyline points="1,5.6 5.5,1.2 10,5.6" stroke="#2a8a3a"/></g></svg>
<div class="t" style="left:1410.2px;top:474.99px;font-size:13px;color:#1e1e1e;">24.08.2023 11:23</div>
<div class="t" style="left:1595px;top:474.99px;font-size:13px;color:#1e1e1e;">17.08.2023 07:17:42</div>
<div class="abs" style="left:321px;top:496px;width:1528px;height:1px;background:#e2e3e8"></div>
<div class="abs" style="left:329px;top:503px;width:13px;height:13px;border:1px solid #6b6fee;border-radius:3px;background:#fff"></div>
<svg class="abs" style="left:373.6px;top:505.7px;" width="8.2" height="13" viewBox="0 0 8.2 13"><rect x="0" y="0" width="8.2" height="13" rx="1" fill="#2a2ad6"/><rect x="0" y="9.6" width="8.2" height="3.4" fill="#b9b9f0"/><rect x="2.6" y="10.6" width="3" height="1" fill="#fff" opacity="0.6"/></svg>
<div class="t" style="left:389.6px;top:505.99px;font-size:13px;color:#1e1e1e;">Pixel 4a</div>
<div class="t" style="left:563px;top:505.99px;font-size:13px;color:#1e1e1e;">Pixel 4a</div>
<div class="t" style="left:748px;top:505.99px;font-size:13px;color:#1e1e1e;">Google</div>
<svg class="abs" style="left:1075px;top:507px;" width="15" height="9" viewBox="0 0 15 9"><path d="M0.2,8.3 A7.3,6.3 0 0 1 14.6,8.3 Z" fill="#0c7d0c"/><circle cx="3.9" cy="5.7" r="0.75" fill="#f8f8fa"/><circle cx="11" cy="5.7" r="0.75" fill="#f8f8fa"/><g stroke="#0c7d0c" stroke-width="0.8"><line x1="3.4" y1="2.9" x2="2.2" y2="0.6"/><line x1="11.4" y1="2.9" x2="12.6" y2="0.6"/></g></svg>
<div class="t" style="left:1096.5px;top:505.99px;font-size:13px;color:#1e1e1e;">Android 13</div>
<div class="t" style="left:1236.5px;top:505.99px;font-size:13px;color:#1e1e1e;">master</div>
<svg class="abs" style="left:1392.5px;top:506px;" width="11" height="12" viewBox="0 0 11 12"><g fill="none" stroke-width="1.3"><line x1="5.5" y1="1.2" x2="5.5" y2="11.8" stroke="#7cc48a"/><line x1="5.5" y1="1.2" x2="5.5" y2="6" stroke="#2a8a3a"/><polyline points="1,5.6 5.5,1.2 10,5.6" stroke="#2a8a3a"/></g></svg>
<div class="t" style="left:1410.2px;top:505.99px;font-size:13px;color:#1e1e1e;">17.10.2023 08:56</div>
<div class="t" style="left:1595px;top:505.99px;font-size:13px;color:#1e1e1e;">17.10.2023 06:23:07</div>
<div class="abs" style="left:321px;top:527px;width:1528px;height:1px;background:#e2e3e8"></div>
<div class="abs" style="left:329px;top:534px;width:13px;height:13px;border:1px solid #6b6fee;border-radius:3px;background:#fff"></div>
<svg class="abs" style="left:373.6px;top:536.7px;" width="8.2" height="13" viewBox="0 0 8.2 13"><rect x="0" y="0" width="8.2" height="13" rx="1" fill="#2a2ad6"/><rect x="0" y="9.6" width="8.2" height="3.4" fill="#b9b9f0"/><rect x="2.6" y="10.6" width="3" height="1" fill="#fff" opacity="0.6"/></svg>
<div class="t" style="left:389.6px;top:536.99px;font-size:13px;color:#1e1e1e;">Pixel 4a</div>
<div class="t" style="left:563px;top:536.99px;font-size:13px;color:#1e1e1e;">Pixel 4a</div>
<div class="t" style="left:748px;top:536.99px;font-size:13px;color:#1e1e1e;">Google</div>
<svg class="abs" style="left:1075px;top:538px;" width="15" height="9" viewBox="0 0 15 9"><path d="M0.2,8.3 A7.3,6.3 0 0 1 14.6,8.3 Z" fill="#0c7d0c"/><circle cx="3.9" cy="5.7" r="0.75" fill="#f8f8fa"/><circle cx="11" cy="5.7" r="0.75" fill="#f8f8fa"/><g stroke="#0c7d0c" stroke-width="0.8"><line x1="3.4" y1="2.9" x2="2.2" y2="0.6"/><line x1="11.4" y1="2.9" x2="12.6" y2="0.6"/></g></svg>
<div class="t" style="left:1096.5px;top:536.99px;font-size:13px;color:#1e1e1e;">Android 13</div>
<div class="t" style="left:1236.5px;top:536.99px;font-size:13px;color:#1e1e1e;">1.8.17</div>
<svg class="abs" style="left:1392.5px;top:537px;" width="11" height="12" viewBox="0 0 11 12"><g fill="none" stroke-width="1.3"><line x1="5.5" y1="1.2" x2="5.5" y2="11.8" stroke="#7cc48a"/><line x1="5.5" y1="1.2" x2="5.5" y2="6" stroke="#2a8a3a"/><polyline points="1,5.6 5.5,1.2 10,5.6" stroke="#2a8a3a"/></g></svg>
<div class="t" style="left:1410.2px;top:536.99px;font-size:13px;color:#1e1e1e;">18.10.2023 07:51</div>
<div class="t" style="left:1595px;top:536.99px;font-size:13px;color:#1e1e1e;">17.10.2023 07:34:50</div>
<div class="abs" style="left:321px;top:558px;width:1528px;height:1px;background:#e2e3e8"></div>
<div class="abs" style="left:329px;top:565px;width:13px;height:13px;border:1px solid #6b6fee;border-radius:3px;background:#fff"></div>
<svg class="abs" style="left:373.6px;top:567.7px;" width="8.2" height="13" viewBox="0 0 8.2 13"><rect x="0" y="0" width="8.2" height="13" rx="1" fill="#2a2ad6"/><rect x="0" y="9.6" width="8.2" height="3.4" fill="#b9b9f0"/><rect x="2.6" y="10.6" width="3" height="1" fill="#fff" opacity="0.6"/></svg>
<div class="t" style="left:389.6px;top:567.99px;font-size:13px;color:#1e1e1e;">Galaxy A10</div>
<div class="t" style="left:563px;top:567.99px;font-size:13px;color:#1e1e1e;">SM-A105FN</div>
<div class="t" style="left:748px;top:567.99px;font-size:13px;color:#1e1e1e;">samsung</div>
<div class="t" style="left:898px;top:567.99px;font-size:13px;color:#1e1e1e;letter-spacing:0.28px">355460115822048</div>
<svg class="abs" style="left:1075px;top:569px;" width="15" height="9" viewBox="0 0 15 9"><path d="M0.2,8.3 A7.3,6.3 0 0 1 14.6,8.3 Z" fill="#0c7d0c"/><circle cx="3.9" cy="5.7" r="0.75" fill="#f8f8fa"/><circle cx="11" cy="5.7" r="0.75" fill="#f8f8fa"/><g stroke="#0c7d0c" stroke-width="0.8"><line x1="3.4" y1="2.9" x2="2.2" y2="0.6"/><line x1="11.4" y1="2.9" x2="12.6" y2="0.6"/></g></svg>
<div class="t" style="left:1096.5px;top:567.99px;font-size:13px;color:#1e1e1e;">Android 11</div>
<div class="t" style="left:1236.5px;top:567.99px;font-size:13px;color:#1e1e1e;">1.8.16</div>
<svg class="abs" style="left:1392.5px;top:568px;" width="11" height="12" viewBox="0 0 11 12"><g fill="none" stroke-width="1.3"><line x1="5.5" y1="1.2" x2="5.5" y2="11.8" stroke="#7cc48a"/><line x1="5.5" y1="1.2" x2="5.5" y2="6" stroke="#2a8a3a"/><polyline points="1,5.6 5.5,1.2 10,5.6" stroke="#2a8a3a"/></g></svg>
<div class="t" style="left:1410.2px;top:567.99px;font-size:13px;color:#1e1e1e;">17.10.2023 11:41</div>
<div class="t" style="left:1595px;top:567.99px;font-size:13px;color:#1e1e1e;">18.09.2023 05:42:28</div>
<div class="abs" style="left:321px;top:589px;width:1528px;height:1px;background:#e2e3e8"></div>
<div class="abs" style="left:329px;top:596px;width:13px;height:13px;border:1px solid #6b6fee;border-radius:3px;background:#fff"></div>
<svg class="abs" style="left:373.6px;top:598.7px;" width="8.2" height="13" viewBox="0 0 8.2 13"><rect x="0" y="0" width="8.2" height="13" rx="1" fill="#2a2ad6"/><rect x="0" y="9.6" width="8.2" height="3.4" fill="#b9b9f0"/><rect x="2.6" y="10.6" width="3" height="1" fill="#fff" opacity="0.6"/></svg>
<div class="t" style="left:389.6px;top:598.99px;font-size:13px;color:#1e1e1e;">Galaxy A13</div>
<div class="t" style="left:563px;top:598.99px;font-size:13px;color:#1e1e1e;">SM-A135F</div>
<div class="t" style="left:748px;top:598.99px;font-size:13px;color:#1e1e1e;">samsung</div>
<div class="t" style="left:898px;top:598.99px;font-size:13px;color:#1e1e1e;letter-spacing:0.28px">356002720127758</div>
<svg class="abs" style="left:1075px;top:600px;" width="15" height="9" viewBox="0 0 15 9"><path d="M0.2,8.3 A7.3,6.3 0 0 1 14.6,8.3 Z" fill="#0c7d0c"/><circle cx="3.9" cy="5.7" r="0.75" fill="#f8f8fa"/><circle cx="11" cy="5.7" r="0.75" fill="#f8f8fa"/><g stroke="#0c7d0c" stroke-width="0.8"><line x1="3.4" y1="2.9" x2="2.2" y2="0.6"/><line x1="11.4" y1="2.9" x2="12.6" y2="0.6"/></g></svg>
<div class="t" style="left:1096.5px;top:598.99px;font-size:13px;color:#1e1e1e;">Android 12</div>
<div class="t" style="left:1236.5px;top:598.99px;font-size:13px;color:#1e1e1e;">1.8.17</div>
<svg class="abs" style="left:1392.5px;top:599px;" width="11" height="12" viewBox="0 0 11 12"><g fill="none" stroke-width="1.3"><line x1="5.5" y1="1.2" x2="5.5" y2="11.8" stroke="#7cc48a"/><line x1="5.5" y1="1.2" x2="5.5" y2="6" stroke="#2a8a3a"/><polyline points="1,5.6 5.5,1.2 10,5.6" stroke="#2a8a3a"/></g></svg>
<div class="t" style="left:1410.2px;top:598.99px;font-size:13px;color:#1e1e1e;">13.11.2023 08:31</div>
<div class="t" style="left:1595px;top:598.99px;font-size:13px;color:#1e1e1e;">25.10.2023 06:54:16</div>
<div class="abs" style="left:321px;top:620px;width:1528px;height:1px;background:#e2e3e8"></div>
<div class="abs" style="left:329px;top:627px;width:13px;height:13px;border:1px solid #6b6fee;border-radius:3px;background:#fff"></div>
<svg class="abs" style="left:373.6px;top:629.7px;" width="8.2" height="13" viewBox="0 0 8.2 13"><rect x="0" y="0" width="8.2" height="13" rx="1" fill="#2a2ad6"/><rect x="0" y="9.6" width="8.2" height="3.4" fill="#b9b9f0"/><rect x="2.6" y="10.6" width="3" height="1" fill="#fff" opacity="0.6"/></svg>
<div class="t" style="left:389.6px;top:629.99px;font-size:13px;color:#1e1e1e;">Pixel 4a</div>
<div class="t" style="left:563px;top:629.99px;font-size:13px;color:#1e1e1e;">Pixel 4a</div>
<div class="t" style="left:748px;top:629.99px;font-size:13px;color:#1e1e1e;">Google</div>
<div class="t" style="left:898px;top:629.99px;font-size:13px;color:#1e1e1e;letter-spacing:0.28px">357480103545201</div>
<svg class="abs" style="left:1075px;top:631px;" width="15" height="9" viewBox="0 0 15 9"><path d="M0.2,8.3 A7.3,6.3 0 0 1 14.6,8.3 Z" fill="#0c7d0c"/><circle cx="3.9" cy="5.7" r="0.75" fill="#f8f8fa"/><circle cx="11" cy="5.7" r="0.75" fill="#f8f8fa"/><g stroke="#0c7d0c" stroke-width="0.8"><line x1="3.4" y1="2.9" x2="2.2" y2="0.6"/><line x1="11.4" y1="2.9" x2="12.6" y2="0.6"/></g></svg>
<div class="t" style="left:1096.5px;top:629.99px;font-size:13px;color:#1e1e1e;">Android 13</div>
<div class="t" style="left:1236.5px;top:629.99px;font-size:13px;color:#1e1e1e;">1.8.18</div>
<svg class="abs" style="left:1392.5px;top:630px;" width="11" height="12" viewBox="0 0 11 12"><g fill="none" stroke-width="1.3"><line x1="5.5" y1="1.2" x2="5.5" y2="11.8" stroke="#7cc48a"/><line x1="5.5" y1="1.2" x2="5.5" y2="6" stroke="#2a8a3a"/><polyline points="1,5.6 5.5,1.2 10,5.6" stroke="#2a8a3a"/></g></svg>
<div class="t" style="left:1410.2px;top:629.99px;font-size:13px;color:#1e1e1e;">20.11.2023 09:41</div>
<div class="t" style="left:1595px;top:629.99px;font-size:13px;color:#1e1e1e;">15.11.2023 09:51:40</div>
<div class="abs" style="left:321px;top:651px;width:1528px;height:1px;background:#e2e3e8"></div>
<div class="abs" style="left:329px;top:658px;width:13px;height:13px;border:1px solid #6b6fee;border-radius:3px;background:#fff"></div>
<svg class="abs" style="left:373.6px;top:660.7px;" width="8.2" height="13" viewBox="0 0 8.2 13"><rect x="0" y="0" width="8.2" height="13" rx="1" fill="#2a2ad6"/><rect x="0" y="9.6" width="8.2" height="3.4" fill="#b9b9f0"/><rect x="2.6" y="10.6" width="3" height="1" fill="#fff" opacity="0.6"/></svg>
<div class="t" style="left:389.6px;top:660.99px;font-size:13px;color:#1e1e1e;">Galaxy A10</div>
<div class="t" style="left:563px;top:660.99px;font-size:13px;color:#1e1e1e;">SM-A105FN</div>
<div class="t" style="left:748px;top:660.99px;font-size:13px;color:#1e1e1e;">samsung</div>
<svg class="abs" style="left:1075px;top:662px;" width="15" height="9" viewBox="0 0 15 9"><path d="M0.2,8.3 A7.3,6.3 0 0 1 14.6,8.3 Z" fill="#0c7d0c"/><circle cx="3.9" cy="5.7" r="0.75" fill="#f8f8fa"/><circle cx="11" cy="5.7" r="0.75" fill="#f8f8fa"/><g stroke="#0c7d0c" stroke-width="0.8"><line x1="3.4" y1="2.9" x2="2.2" y2="0.6"/><line x1="11.4" y1="2.9" x2="12.6" y2="0.6"/></g></svg>
<div class="t" style="left:1096.5px;top:660.99px;font-size:13px;color:#1e1e1e;">Android 11</div>
<div class="t" style="left:1236.5px;top:660.99px;font-size:13px;color:#1e1e1e;">1.8.16</div>
<svg class="abs" style="left:1392.5px;top:661px;" width="11" height="12" viewBox="0 0 11 12"><g fill="none" stroke-width="1.3"><line x1="5.5" y1="1.2" x2="5.5" y2="11.8" stroke="#7cc48a"/><line x1="5.5" y1="1.2" x2="5.5" y2="6" stroke="#2a8a3a"/><polyline points="1,5.6 5.5,1.2 10,5.6" stroke="#2a8a3a"/></g></svg>
<div class="t" style="left:1410.2px;top:660.99px;font-size:13px;color:#1e1e1e;">05.10.2023 13:35</div>
<div class="t" style="left:1595px;top:660.99px;font-size:13px;color:#1e1e1e;">18.09.2023 10:29:28</div>
<div class="abs" style="left:321px;top:682px;width:1578px;height:2px;background:#dcdde2"></div>
<svg class="abs" style="left:339px;top:702px;" width="8" height="9" viewBox="0 0 8 9"><rect x="0" y="0" width="1.4" height="9" fill="#555"/><polygon points="8,0 8,9 2,4.5" fill="#555"/></svg>
<svg class="abs" style="left:370px;top:702px;" width="7" height="9" viewBox="0 0 7 9"><polygon points="6.5,0 6.5,9 0.5,4.5" fill="#555"/></svg>
<div class="abs" style="left:389px;top:691px;width:31px;height:31px;background:#cfd1ee"></div>
<div class="t" style="left:400.5px;top:699.99px;font-size:13px;color:#3232c8;">1</div>
<svg class="abs" style="left:433px;top:702px;" width="7" height="9" viewBox="0 0 7 9"><polygon points="0.5,0 0.5,9 6.5,4.5" fill="#555"/></svg>
<svg class="abs" style="left:462px;top:702px;" width="8" height="9" viewBox="0 0 8 9"><polygon points="0,0 0,9 6,4.5" fill="#555"/><rect x="6.6" y="0" width="1.4" height="9" fill="#555"/></svg>
<div class="t" style="left:494.8px;top:699.99px;font-size:13px;color:#1e1e1e;">Strona</div>
<div class="abs" style="left:540px;top:691px;width:65px;height:31px;border:1px solid #dfe5f7;border-radius:4px"></div>
<div class="t" style="left:552px;top:699.99px;font-size:13px;color:#1e1e1e;">1</div>
<div class="t" style="left:612.5px;top:699.99px;font-size:13px;color:#1e1e1e;">z 1</div>
<div class="abs" style="left:642px;top:691px;width:65px;height:31px;border:1px solid #dfe5f7;border-radius:4px;overflow:hidden"><div class="abs" style="right:0;top:0;width:27px;height:29px;background:#e8ecfb"></div></div>
<div class="t" style="left:653px;top:699.99px;font-size:13px;color:#1e1e1e;">20</div>
<svg class="abs" style="left:689px;top:703px;" width="8" height="6" viewBox="0 0 8 6"><polygon points="0,0 8,0 4,6" fill="#2a2ad4"/></svg>
<div class="t" style="left:714.4px;top:699.99px;font-size:13px;color:#1e1e1e;">na stronę</div>
<div class="t" style="left:1642px;top:699.99px;font-size:13px;color:#1e1e1e;letter-spacing:0.08px">Wyświetlanie elementów 1 - 12 z 12</div>
<svg class="abs" style="left:1871px;top:697px;" width="16" height="18" viewBox="0 0 16 18"><path d="M12.6,6.2 A5.8,5.8 0 1 1 8,4.6" fill="none" stroke="#222" stroke-width="1.9"/><polygon points="7.6,1 12,4.6 7.6,8" fill="#222"/></svg>

</body>
</html>
